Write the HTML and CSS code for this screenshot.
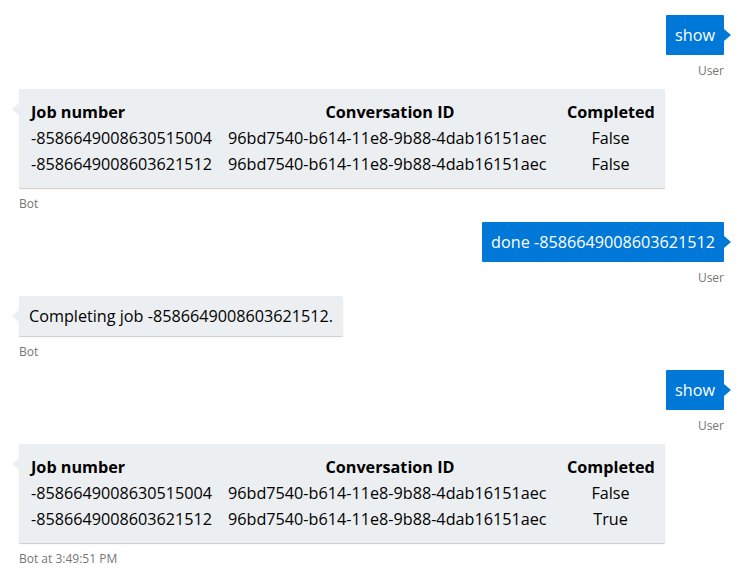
FILE: index.html
```html
<!DOCTYPE html>
<html>
<head>
<meta charset="utf-8">
<link rel="stylesheet" href="styles.css">
</head>
<body>
<div class="chat">
  <div class="msg user">
    <div class="bubble">show</div>
    <div class="from">User</div>
  </div>
  <div class="msg bot">
    <div class="bubble card">
      <div class="grid">
        <div class="h left">Job number</div>
        <div class="h center">Conversation ID</div>
        <div class="h center">Completed</div>
        <div class="left">-8586649008630515004</div>
        <div class="left">96bd7540-b614-11e8-9b88-4dab16151aec</div>
        <div class="center">False</div>
        <div class="left">-8586649008603621512</div>
        <div class="left">96bd7540-b614-11e8-9b88-4dab16151aec</div>
        <div class="center">False</div>
      </div>
    </div>
    <div class="from">Bot</div>
  </div>
  <div class="msg user">
    <div class="bubble">done -8586649008603621512</div>
    <div class="from">User</div>
  </div>
  <div class="msg bot">
    <div class="bubble">Completing job -8586649008603621512.</div>
    <div class="from">Bot</div>
  </div>
  <div class="msg user">
    <div class="bubble">show</div>
    <div class="from">User</div>
  </div>
  <div class="msg bot">
    <div class="bubble card">
      <div class="grid">
        <div class="h left">Job number</div>
        <div class="h center">Conversation ID</div>
        <div class="h center">Completed</div>
        <div class="left">-8586649008630515004</div>
        <div class="left">96bd7540-b614-11e8-9b88-4dab16151aec</div>
        <div class="center">False</div>
        <div class="left">-8586649008603621512</div>
        <div class="left">96bd7540-b614-11e8-9b88-4dab16151aec</div>
        <div class="center">True</div>
      </div>
    </div>
    <div class="from">Bot at 3:49:51 PM</div>
  </div>
</div>
</body>
</html>
```
FILE: styles.css
```css
html, body {
  margin: 0;
  padding: 0;
  background: #ffffff;
}
body {
  font-family: "Open Sans", "Noto Sans", sans-serif;
  font-size: 16.2px;
  color: #000;
}
.chat {
  display: flex;
  flex-direction: column;
  padding: 15px 26px 0 19px;
}
.msg {
  display: flex;
  flex-direction: column;
  margin-bottom: 10px;
}
.msg.user {
  align-items: flex-end;
}
.msg.bot {
  align-items: flex-start;
}
.bubble {
  position: relative;
  padding: 10px 10px;
  line-height: 20px;
  white-space: nowrap;
}
.user .bubble {
  background: #0078d7;
  color: #ffffff;
  border-radius: 1px;
  padding: 10px 9px;
}
.bot .bubble {
  background: #eceff1;
  color: #000;
  box-shadow: 0 1px 1px rgba(0, 0, 0, 0.2);
  border-radius: 1px;
}
.user .bubble::after {
  content: "";
  position: absolute;
  right: -7px;
  top: 14px;
  border-top: 6px solid transparent;
  border-bottom: 6px solid transparent;
  border-left: 7px solid #0078d7;
}
.bot .bubble::before {
  content: "";
  position: absolute;
  left: -7px;
  top: 14px;
  border-top: 6px solid transparent;
  border-bottom: 6px solid transparent;
  border-right: 7px solid #eceff1;
}
.from {
  margin-top: 8px;
  font-size: 12px;
  line-height: 16px;
  color: #767676;
}
.card {
  padding: 10px 11px 11px 12px;
}
.grid {
  display: grid;
  grid-template-columns: 182px 324px 87px;
  column-gap: 15px;
}
.grid > div {
  line-height: 26px;
  white-space: nowrap;
}
.h {
  font-weight: 700;
}
.left {
  text-align: left;
}
.center {
  text-align: center;
}
```
